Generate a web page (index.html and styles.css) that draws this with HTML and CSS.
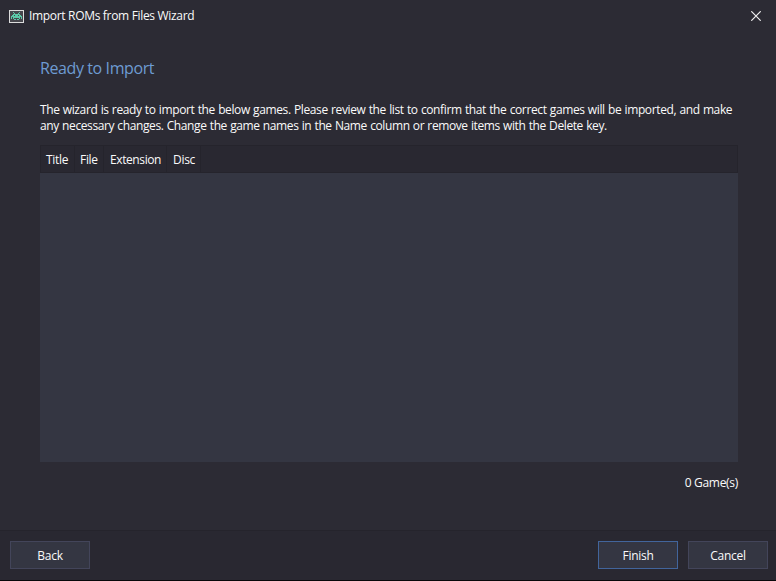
FILE: index.html
```html
<!DOCTYPE html>
<html lang="en">
<head>
    <meta charset="UTF-8">
    <meta name="viewport" content="width=device-width, initial-scale=1.0">
    <title>Import ROMs from Files Wizard</title>
    <link rel="stylesheet" href="styles.css">
</head>
<body>
    <header class="titlebar">
        <svg class="app-icon" width="15" height="13" viewBox="0 0 15 13" shape-rendering="crispEdges">
            <rect x="0.5" y="0.5" width="14" height="12" fill="#46464c" stroke="#dcdcdc"/>
            <path fill="#5bc9a8" d="M4 2h1v1h-1zM10 2h1v1h-1zM5 3h1v1h-1zM9 3h1v1h-1zM4 4h7v1h-7zM3 5h2v1h-2zM6 5h3v1h-3zM10 5h2v1h-2zM2 6h11v1h-11zM2 7h1v2h-1zM12 7h1v2h-1zM4 7h7v1h-7zM4 8h1v1h-1zM10 8h1v1h-1zM5 9h2v1h-2zM8 9h2v1h-2z"/>
        </svg>
        <span class="titlebar-text">Import ROMs from Files Wizard</span>
        <button type="button" class="close-btn" aria-label="Close">
            <svg width="10" height="10" viewBox="0 0 10 10">
                <path d="M0.3 0.3L9.7 9.7M9.7 0.3L0.3 9.7" stroke="#f0f0f0" stroke-width="1.2"/>
            </svg>
        </button>
    </header>

    <main>
        <h1>Ready to Import</h1>
        <p class="intro">The wizard is ready to import the below games. Please review the list to confirm that the correct games will be imported, and make<br>
        <span class="intro-end">any necessary changes. Change the game names in the Name column or remove items with the Delete key.</span></p>

        <div class="games">
            <div class="games-header">
                <div class="col-title">Title</div>
                <div class="col-file">File</div>
                <div class="col-ext">Extension</div>
                <div class="col-disc">Disc</div>
            </div>
        </div>
        <div class="count">0 Game(s)</div>
    </main>

    <footer>
        <button type="button" class="btn back">Back</button>
        <button type="button" class="btn primary">Finish</button>
        <button type="button" class="btn">Cancel</button>
    </footer>
</body>
</html>
```

FILE: styles.css
```css
* {
    box-sizing: border-box;
}

body {
    font-family: "Open Sans", "Noto Sans", sans-serif;
    font-size: 12px;
    line-height: 16px;
    background-color: #2c2b34;
    color: #fafafa;
    margin: 0;
    height: 581px;
    display: flex;
    flex-direction: column;
    overflow: hidden;
}

.titlebar {
    height: 32px;
    padding-left: 9px;
    display: flex;
    align-items: center;
}

.app-icon {
    margin-right: 5px;
}

.titlebar-text {
    letter-spacing: -0.32px;
}

.close-btn {
    display: flex;
    align-items: center;
    justify-content: center;
    width: 40px;
    height: 32px;
    margin-left: auto;
    padding: 0;
    border: none;
    background: none;
}

main {
    flex: 1;
    padding: 24px 38px 0 40px;
}

h1 {
    margin: 0 0 22px;
    color: #6e9bd2;
    font-size: 16px;
    font-weight: normal;
    line-height: 24px;
    letter-spacing: -0.4px;
}

.intro {
    margin: 0 0 11px;
    white-space: nowrap;
    letter-spacing: -0.38px;
    word-spacing: 0.5px;
}

.intro-end {
    letter-spacing: -0.394px;
}

.games {
    height: 317px;
    background-color: #343642;
}

.games-header {
    display: flex;
    height: 28px;
    background-color: #292831;
    border: 1px solid #25242c;
    line-height: 28px;
}

.games-header div {
    padding-left: 5px;
    border-right: 1px solid #25242c;
    letter-spacing: -0.3px;
}

.col-title {
    width: 34px;
}

.games-header .col-file {
    width: 29px;
}

.games-header .col-ext {
    width: 63px;
    padding-left: 6px;
    letter-spacing: -0.4px;
}

.games-header .col-disc {
    width: 34px;
    padding-left: 6px;
}

.count {
    margin-top: 13px;
    text-align: right;
    letter-spacing: -0.3px;
}

footer {
    display: flex;
    gap: 10px;
    height: 51px;
    padding: 10px 8px 0 10px;
    background-color: #292831;
    border-top: 1px solid #25242c;
    border-bottom: 1px solid #08080a;
}

.btn {
    width: 80px;
    height: 28px;
    padding: 2px 0 0;
    border: 1px solid #43455a;
    background-color: #343642;
    color: #fafafa;
    font: inherit;
    letter-spacing: -0.3px;
}

.btn.back {
    margin-right: auto;
}

.btn.primary {
    border-color: #42659c;
}
```
